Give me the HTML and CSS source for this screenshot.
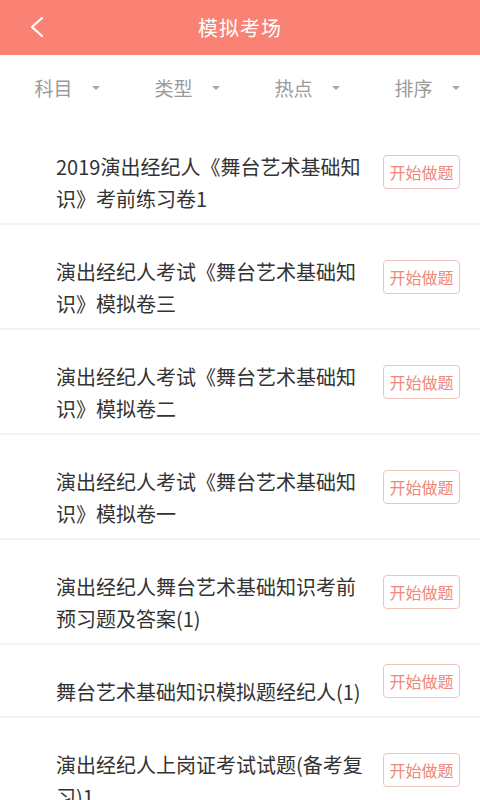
FILE: index.html
```html
<!DOCTYPE html>
<html lang="zh-CN">
<head>
    <meta charset="UTF-8">
    <meta name="viewport" content="width=device-width, initial-scale=1.0">
    <title>模拟考场</title>
    <link rel="stylesheet" href="styles.css">
</head>
<body>
    <div class="header">
        <span class="back">
            <svg width="16" height="22" viewBox="0 0 16 22">
                <polyline points="13,2 3,11 13,20" fill="none" stroke="#fff" stroke-width="2.2" stroke-linecap="round" stroke-linejoin="round"/>
            </svg>
        </span>
        <h1>模拟考场</h1>
    </div>

    <div class="filters">
        <div class="filter">科目<span class="arrow"></span></div>
        <div class="filter">类型<span class="arrow"></span></div>
        <div class="filter">热点<span class="arrow"></span></div>
        <div class="filter">排序<span class="arrow"></span></div>
    </div>

    <ul class="paper-list">
        <li class="paper">
            <p class="paper-title">2019演出经纪人《舞台艺术基础知识》考前练习卷1</p>
            <button class="start-btn">开始做题</button>
        </li>
        <li class="paper">
            <p class="paper-title">演出经纪人考试《舞台艺术基础知识》模拟卷三</p>
            <button class="start-btn">开始做题</button>
        </li>
        <li class="paper">
            <p class="paper-title">演出经纪人考试《舞台艺术基础知识》模拟卷二</p>
            <button class="start-btn">开始做题</button>
        </li>
        <li class="paper">
            <p class="paper-title">演出经纪人考试《舞台艺术基础知识》模拟卷一</p>
            <button class="start-btn">开始做题</button>
        </li>
        <li class="paper">
            <p class="paper-title">演出经纪人舞台艺术基础知识考前预习题及答案(1)</p>
            <button class="start-btn">开始做题</button>
        </li>
        <li class="paper">
            <p class="paper-title">舞台艺术基础知识模拟题经纪人(1)</p>
            <button class="start-btn">开始做题</button>
        </li>
        <li class="paper">
            <p class="paper-title">演出经纪人上岗证考试试题(备考复习)1</p>
            <button class="start-btn">开始做题</button>
        </li>
    </ul>
</body>
</html>
```

FILE: styles.css
```css
body {
    margin: 0;
    padding: 0;
    background-color: #fff;
    font-family: "Noto Sans CJK SC", "Noto Sans", sans-serif;
    overflow: hidden;
}

.header {
    height: 55px;
    background-color: #fa8274;
    display: flex;
    align-items: center;
    justify-content: center;
    position: relative;
}

.header h1 {
    margin: 0;
    font-size: 20px;
    font-weight: normal;
    color: #fff;
    letter-spacing: 1px;
}

.back {
    position: absolute;
    left: 29px;
    top: 16px;
    display: flex;
}

.filters {
    height: 65px;
    display: flex;
}

.filter {
    width: 120px;
    padding-left: 14px;
    box-sizing: border-box;
    display: flex;
    align-items: center;
    justify-content: center;
    font-size: 19px;
    color: #9a9a9a;
}

.arrow {
    margin-left: 19px;
    width: 0;
    height: 0;
    border-left: 4px solid transparent;
    border-right: 4px solid transparent;
    border-top: 4px solid #a8a8a8;
}

.paper-list {
    list-style: none;
    margin: 0;
    padding: 0;
}

.paper {
    display: flex;
    align-items: center;
    padding: 0 20px 0 56px;
    border-bottom: 2px solid #f3f3f3;
}

.paper-title {
    flex: 1;
    margin: 0;
    padding: 31px 0 8px;
    font-size: 20px;
    line-height: 32px;
    color: #333;
}

.start-btn {
    margin-left: 17px;
    width: 77px;
    height: 34px;
    padding: 0;
    background: #fff;
    border: 1px solid #efc4be;
    border-radius: 4px;
    color: #ee877c;
    font-family: inherit;
    font-size: 16px;
}
```
